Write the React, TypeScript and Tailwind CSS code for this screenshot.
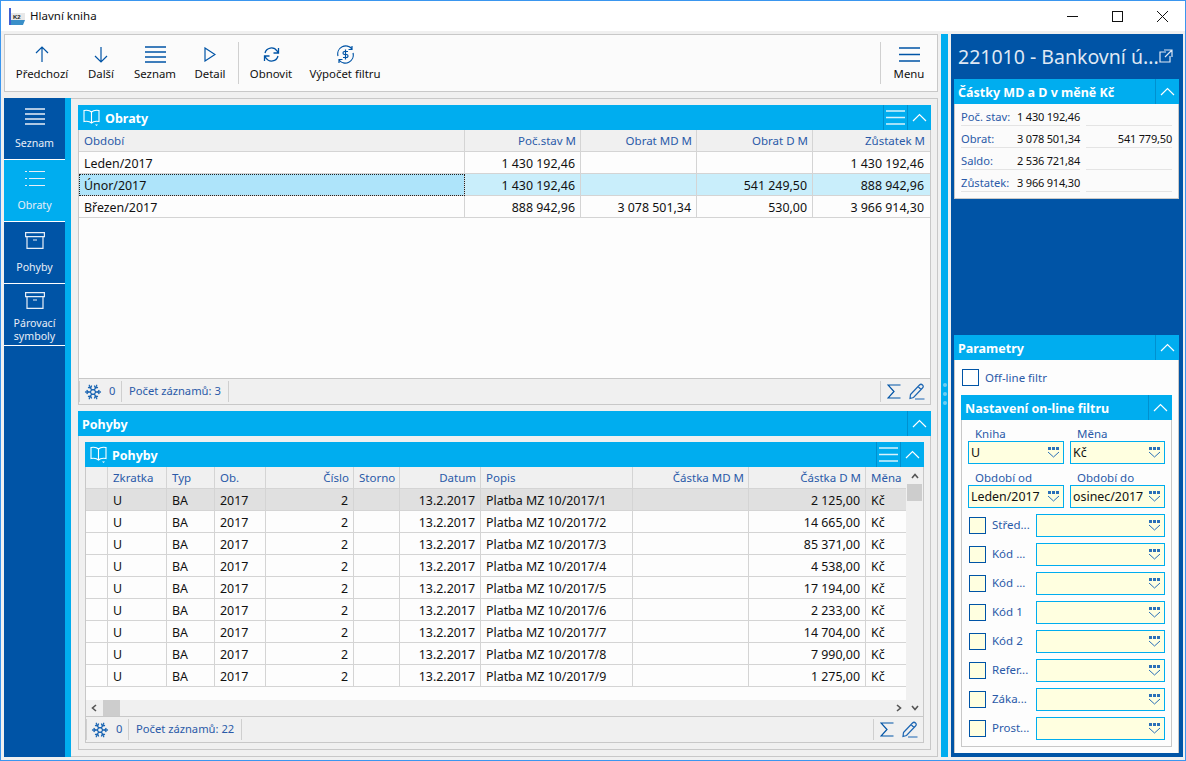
import React from "react";
import { Snowflake } from "lucide-react";

const Lines = ({ c = "#0054a6", w = 21, n = 4 }: { c?: string; w?: number; n?: number }) => (
  <svg width={w} height="17" viewBox={`0 0 ${w} 17`} fill="none" stroke={c} strokeWidth="1.3">
    <path d={n === 4 ? `M0 1h${w}M0 6h${w}M0 11h${w}M0 16h${w}` : `M0 2h${w}M0 8.500h${w}M0 15h${w}`} />
  </svg>
);
const Chevron = () => (
  <svg width="15" height="9" viewBox="0 0 15 9" fill="none" stroke="#fff" strokeWidth="1.2"><path d="M1 8l6.500-6.500L14 8" /></svg>
);
const Drop = () => (
  <svg width="13" height="11" viewBox="0 0 13 11" className="shrink-0">
    <path d="M1 0h3v3H1zM5 0h3v3H5zM9 0h3v3H9z" fill="#2b70b8" />
    <path d="M1 5l5.500 5L12 5" fill="none" stroke="#2b70b8" strokeWidth="1" />
  </svg>
);
const Box = () => (
  <svg width="20" height="17" viewBox="0 0 20 17" fill="none" stroke="#e8eef7" strokeWidth="1.2">
    <path d="M.6.6h18.800v4H.6zM2 4.600v11.800h16V4.600M8 8h4" />
  </svg>
);
const Book = () => (
  <svg width="17" height="17" viewBox="0 0 17 17" fill="none" stroke="#fff" strokeWidth="1.1" className="ml-[5px] mr-[5px] shrink-0">
    <path d="M8.500 3C7 1.500 4 1 1 1.500v11c3-.5 6 0 7.500 1.500 1.500-1.500 4.500-2 7.500-1.500v-11C13 1 10 1.500 8.500 3zM8.500 3v11" />
    <path d="M12 15.500h3l-1.500 1.500z" fill="#fff" stroke="none" />
  </svg>
);
const Head = ({ title, book, lines }: { title: string; book?: boolean; lines?: boolean }) => (
  <div className="h-[25px] shrink-0 bg-[#00adef] flex items-center text-white font-bold text-[12.5px]">
    {book && <Book />}
    <span className={`pt-[3px] ${book ? "" : "ml-[4px]"}`}>{title}</span>
    <div className="flex-1" />
    {lines && (
      <div className="h-full w-[24px] border-l border-[#0090cf] flex items-center justify-center">
        <Lines c="#d8f2fc" w={19} n={3} />
      </div>
    )}
    <div className="h-full w-[24px] border-l border-[#0090cf] flex items-center justify-center"><Chevron /></div>
  </div>
);
const Foot = ({ n }: { n: number }) => (
  <div className="h-[25px] shrink-0 bg-[#f0f0f0] flex items-center text-[11.2px] text-[#2a5aa8]">
    <div className="h-[21px] w-[43px] border-x border-[#cfcfcf] flex items-center pl-[4px] gap-[7px] shrink-0">
      <Snowflake size={18} strokeWidth={1.7} className="text-[#1c66b3]" />
      <span>0</span>
    </div>
    <div className="h-[21px] px-[7px] border-r border-[#cfcfcf] flex items-center">Počet záznamů: {n}</div>
    <div className="flex-1" />
    <div className="h-[21px] w-[50px] border-l border-[#cfcfcf] flex items-center pl-[6px] gap-[8px]">
      <svg width="14" height="15" viewBox="0 0 14 15" fill="none" stroke="#0054a6" strokeWidth="1.2"><path d="M13.500 1H1l6 6.500L1 14h12.500" /></svg>
      <svg width="16" height="17" viewBox="0 0 16 17" fill="none" stroke="#1c66b3" strokeWidth="1.2"><path d="M1.500 11.500L10.500 2a2 2 0 0 1 3 3l-9 9.500-3.500 1zM9 3.500l3 3M6 16h9.500" /></svg>
    </div>
  </div>
);

const Tool = ({ w, label, children }: { w: string; label: string; children: React.ReactNode }) => (
  <div className={`${w} shrink-0 self-start flex flex-col items-center pt-[10px]`}>
    <div className="h-[19px] flex items-center justify-center">{children}</div>
    <div className="mt-px text-[11.4px] leading-[18px] text-[#111] whitespace-nowrap">{label}</div>
  </div>
);

const Nav = ({ label, active, h, children }: { label: string; active?: boolean; h?: boolean; children: React.ReactNode }) => (
  <div className={`h-[62px] border-b border-white flex flex-col items-center text-[#e8eef7] text-[10.6px] leading-[13px] text-center ${active ? "bg-[#00adef]" : ""} ${h ? "pt-[7px]" : "pt-[9px]"}`}>
    <div className="h-[18px] flex items-center">{children}</div>
    <div className={h ? "mt-[8px]" : "mt-[12px]"}>{label}</div>
  </div>
);

const HeadCell = ({ t, r, className = "" }: { t: string; r?: boolean; className?: string }) => (
  <div className={`h-[22px] border-r border-b border-[#d4d4d4] bg-[#f0f0f0] text-[11.5px] text-[#2a5aa8] px-[4px] flex items-center whitespace-nowrap overflow-hidden ${r ? "justify-end" : ""} ${className}`}>{t}</div>
);
const Cell = ({ t, r, className = "" }: { t?: string; r?: boolean; className?: string }) => (
  <div className={`h-[22px] border-r border-b border-[#d4d4d4] text-[12.4px] text-[#111] pl-[5px] pr-[5px] pt-[3px] flex items-center whitespace-nowrap overflow-hidden ${r ? "justify-end" : ""} ${className}`}>{t}</div>
);

const obraty = [
  ["Leden/2017", "1 430 192,46", "", "", "1 430 192,46"],
  ["Únor/2017", "1 430 192,46", "", "541 249,50", "888 942,96"],
  ["Březen/2017", "888 942,96", "3 078 501,34", "530,00", "3 966 914,30"],
];
const amounts = ["2 125,00", "14 665,00", "85 371,00", "4 538,00", "17 194,00", "2 233,00", "14 704,00", "7 990,00", "1 275,00"];

const Field = ({ v, w }: { v?: string; w: string }) => (
  <div className={`${w} h-[23px] border border-[#00adef] bg-[#ffffe0] flex items-center pl-[2px] pr-[3px] text-[12.4px] text-[#111] overflow-hidden`}>
    <span className="flex-1 pt-px whitespace-nowrap overflow-hidden">{v}</span>
    <Drop />
  </div>
);
const Check = ({ bg }: { bg: string }) => <div className={`w-[17px] h-[17px] border border-[#0054a6] shrink-0 ${bg}`} />;

export default function App() {
  return (
    <div className="w-[1186px] h-[761px] border border-[#3a96ef] bg-[#f0f0f0] flex flex-col overflow-hidden font-['Noto_Sans',sans-serif] text-[11.5px]">
      <div className="h-[30px] shrink-0 bg-white flex items-center">
        <svg width="16" height="17" viewBox="0 0 16 17" className="ml-[8px] shrink-0">
          <rect x="0" y="0" width="2" height="17" fill="#3f5fd0" />
          <rect x="2" y="5" width="14" height="7" fill="#e8e8e8" />
          <path d="M2 12h14l-2 5H2z" fill="#3a8fc8" />
          <text x="4" y="11" fontSize="6" fontWeight="700" fill="#222" fontFamily="'Liberation Sans',sans-serif">K2</text>
        </svg>
        <span className="ml-[5px] text-[11.5px] text-[#111]">Hlavní kniha</span>
        <div className="flex-1" />
        <svg width="15" height="15" viewBox="0 0 15 15" fill="none" stroke="#111" className="mr-[30px]"><path d="M2 7.500h11" /></svg>
        <svg width="15" height="15" viewBox="0 0 15 15" fill="none" stroke="#111" className="mr-[30px]"><rect x="2.500" y="2.500" width="10" height="10" /></svg>
        <svg width="15" height="15" viewBox="0 0 15 15" fill="none" stroke="#111" className="mr-[15px]"><path d="M2 2l11 11M13 2L2 13" /></svg>
      </div>
      <div className="flex-1 min-h-0 flex pl-[3px] pt-[3px] pb-[3px] pr-[2px]">
        <div className="w-[934px] shrink-0 flex flex-col">
          <div className="h-[58px] shrink-0 border border-[#c8c8c8] bg-[#fbfbfb] flex items-center">
            <Tool w="w-[74px]" label="Předchozí">
              <svg width="14" height="17" viewBox="0 0 14 17" fill="none" stroke="#0054a6" strokeWidth="1.2"><path d="M7 16V1M1 7l6-6 6 6" /></svg>
            </Tool>
            <Tool w="w-[44px]" label="Další">
              <svg width="14" height="17" viewBox="0 0 14 17" fill="none" stroke="#0054a6" strokeWidth="1.2"><path d="M7 1v15M1 10l6 6 6-6" /></svg>
            </Tool>
            <Tool w="w-[64px]" label="Seznam"><Lines /></Tool>
            <Tool w="w-[46px]" label="Detail">
              <svg width="12" height="15" viewBox="0 0 12 15" fill="none" stroke="#0054a6" strokeWidth="1.2"><path d="M1 1l10 6.500L1 14z" /></svg>
            </Tool>
            <div className="ml-[5px] w-px h-[42px] bg-[#d0d0d0]" />
            <Tool w="w-[64px]" label="Obnovit">
              <svg width="17" height="17" viewBox="0 0 17 17" fill="none" stroke="#0054a6" strokeWidth="1.3"><path d="M2 7a6.600 6.600 0 0 1 12-2l1.500 2M15.500 2v5h-5M15 10a6.600 6.600 0 0 1-12 2l-1.500-2M1.500 15v-5h5" /></svg>
            </Tool>
            <Tool w="w-[84px]" label="Výpočet filtru">
              <svg width="19" height="19" viewBox="0 0 19 19" fill="none" stroke="#0054a6" strokeWidth="1.2">
                <path d="M2 11A8 8 0 0 1 16 4M17 8A8 8 0 0 1 3 15M16 1v3.500h-3.500M3 18v-3.500h3.500" />
                <path d="M12 6.500H8.500a1.500 1.500 0 0 0 0 3h2a1.500 1.500 0 0 1 0 3H7M9.500 4.500v10" />
              </svg>
            </Tool>
            <div className="flex-1" />
            <div className="w-px h-[42px] bg-[#d0d0d0]" />
            <Tool w="w-[56px]" label="Menu"><Lines n={3} /></Tool>
          </div>

          <div className="flex-1 min-h-0 flex mt-[6px]">
            <div className="w-[61px] shrink-0 bg-[#0054a6]">
              <Nav label="Seznam"><Lines c="#e8eef7" w={20} /></Nav>
              <Nav label="Obraty" active>
                <svg width="20" height="17" viewBox="0 0 20 17" fill="none" stroke="#e8eef7" strokeWidth="1.1"><path d="M4 1.500h16M4 8.500h16M4 15.500h16M0 1.500h2M0 8.500h2M0 15.500h2" /></svg>
              </Nav>
              <Nav label="Pohyby"><Box /></Nav>
              <Nav label="Párovací symboly" h><Box /></Nav>
            </div>
            <div className="w-[6px] shrink-0 bg-[#00adef]" />
            <div className="flex-1 min-w-0 border-t border-r border-b border-[#c8c8c8] pl-[7px] pr-[6px] pt-[6px] pb-[6px] flex flex-col">
              <div className="h-[300px] shrink-0 flex flex-col border-b border-[#c8c8c8]">
                <Head title="Obraty" book lines />
                <div className="flex-1 min-h-0 bg-[#fdfdfd] border-x border-[#c8c8c8] grid grid-cols-[386px_116px_116px_116px_1fr] content-start">
                  <HeadCell t="Období" className="px-[5px]" />
                  <HeadCell t="Poč.stav M" r />
                  <HeadCell t="Obrat MD M" r />
                  <HeadCell t="Obrat D M" r />
                  <HeadCell t="Zůstatek M" r className="border-r-0 pr-[5px]" />
                  {obraty.map((row, i) =>
                    row.map((t, j) => (
                      <Cell
                        key={`${i}-${j}`}
                        t={t}
                        r={j > 0}
                        className={`${j === 4 ? "border-r-0 pr-[6px]" : ""} ${i === 1 ? (j === 0 ? "bg-[#aee4fa] outline-1 outline-dotted outline-[#222] -outline-offset-1" : "bg-[#c9eefb]") : ""}`}
                      />
                    ))
                  )}
                </div>
                <div className="border-x border-t border-[#c8c8c8]"><Foot n={3} /></div>
              </div>

              <div className="mt-[6px] h-[339px] shrink-0 flex flex-col border-b border-[#c8c8c8]">
                <Head title="Pohyby" />
                <div className="flex-1 min-h-0 border-x border-[#c8c8c8] pl-[6px] pr-[6px] pt-[6px] pb-[6px] flex">
                  <div className="flex-1 min-w-0 flex flex-col border-b border-[#c8c8c8]">
                    <Head title="Pohyby" book lines />
                    <div className="flex-1 min-h-0 flex border-x border-[#c8c8c8]">
                      <div className="flex-1 min-w-0 flex flex-col bg-[#fdfdfd]">
                        <div className="grid grid-cols-[22px_59px_48px_51px_88px_46px_81px_152px_116px_117px_1fr]">
                          {["", "Zkratka", "Typ", "Ob."].map((t, i) => <HeadCell key={i} t={t} className="px-[5px]" />)}
                          <HeadCell t="Číslo" r />
                          <HeadCell t="Storno" className="px-[5px]" />
                          <HeadCell t="Datum" r />
                          <HeadCell t="Popis" className="px-[5px]" />
                          <HeadCell t="Částka MD M" r />
                          <HeadCell t="Částka D M" r />
                          <HeadCell t="Měna" className="border-r-0 px-[5px]" />
                          {amounts.map((a, i) => {
                            const bg = i === 0 ? "bg-[#e0e0e0]" : "";
                            return (
                              <React.Fragment key={i}>
                                <Cell className={bg} />
                                <Cell t="U" className={bg} />
                                <Cell t="BA" className={bg} />
                                <Cell t="2017" className={bg} />
                                <Cell t="2" r className={bg} />
                                <Cell className={bg} />
                                <Cell t="13.2.2017" r className={bg} />
                                <Cell t={`Platba MZ 10/2017/${i + 1}`} className={bg} />
                                <Cell className={bg} />
                                <Cell t={a} r className={bg} />
                                <Cell t="Kč" className={`border-r-0 ${bg}`} />
                              </React.Fragment>
                            );
                          })}
                        </div>
                        <div className="flex-1" />
                        <div className="h-[16px] shrink-0 bg-[#f0f0f0] flex items-center justify-between pr-[4px] pl-[5px]">
                          <div className="flex items-center">
                            <svg width="6" height="8" viewBox="0 0 6 8" fill="none" stroke="#555" strokeWidth="1.600"><path d="M5 1L1.500 4 5 7" /></svg>
                            <div className="ml-[6px] w-[17px] h-[16px] bg-[#cdcdcd]" />
                          </div>
                          <svg width="6" height="8" viewBox="0 0 6 8" fill="none" stroke="#555" strokeWidth="1.600"><path d="M1 1l3.500 3L1 7" /></svg>
                        </div>
                      </div>
                      <div className="w-[17px] shrink-0 bg-[#f0f0f0] flex flex-col items-center pt-[6px] pb-[5px]">
                        <svg width="8" height="6" viewBox="0 0 8 6" fill="none" stroke="#555" strokeWidth="1.600"><path d="M1 5l3-3.500L7 5" /></svg>
                        <div className="mt-[5px] w-[15px] h-[17px] bg-[#cdcdcd]" />
                        <div className="flex-1" />
                        <svg width="8" height="6" viewBox="0 0 8 6" fill="none" stroke="#555" strokeWidth="1.600"><path d="M1 1l3 3.500L7 1" /></svg>
                      </div>
                    </div>
                    <div className="border-x border-t border-[#c8c8c8]"><Foot n={22} /></div>
                  </div>
                </div>
              </div>
            </div>
          </div>
        </div>

        <div className="w-[7px] shrink-0 ml-[3px] bg-[#00adef] flex flex-col items-center justify-center gap-[5px] pb-[4px]">
          <div className="w-[4px] h-[4px] rounded-full bg-[#6fcdf2]" />
          <div className="w-[4px] h-[4px] rounded-full bg-[#6fcdf2]" />
          <div className="w-[4px] h-[4px] rounded-full bg-[#6fcdf2]" />
        </div>

        <div className="ml-[3px] flex-1 min-w-0 bg-[#0054a6] pl-[3px] pr-[4px] pb-[4px] flex flex-col">
          <div className="h-[45px] shrink-0 flex items-center text-[#dfe8f4]">
            <span className="ml-[4px] text-[19.500px] whitespace-nowrap">221010 - Bankovní ú...</span>
            <div className="flex-1" />
            <svg width="14" height="14" viewBox="0 0 14 14" fill="none" stroke="#dfe8f4" strokeWidth="1.200" className="mr-[6px] mb-[2px] shrink-0">
              <path d="M7 3H1v10h10V7M5 1h8v7M13 1L6 8" />
            </svg>
          </div>
          <Head title="Částky MD a D v měně Kč" />
          <div className="h-[95px] shrink-0 bg-[#fbfbfb] border-x border-b border-[#c8c8c8] pl-[6px] pr-[6px] flex flex-col">
            {[
              ["Poč. stav:", "1 430 192,46", ""],
              ["Obrat:", "3 078 501,34", "541 779,50"],
              ["Saldo:", "2 536 721,84", ""],
              ["Zůstatek:", "3 966 914,30", ""],
            ].map(([l, a, b]) => (
              <div key={l} className="h-[22px] shrink-0 flex whitespace-nowrap">
                <div className="w-[119px] border-b border-[#e4e4e4] pt-[6px] flex items-center justify-between">
                  <span className="text-[#2a5aa8] text-[11.200px]">{l}</span>
                  <span className="text-[#111] text-[11px] tracking-[-0.2px]">{a}</span>
                </div>
                <div className="ml-[6px] flex-1 border-b border-[#e4e4e4] pt-[6px] flex items-center justify-end text-[#111] text-[11px] tracking-[-0.2px]">{b}</div>
              </div>
            ))}
          </div>
          <div className="flex-1" />
          <Head title="Parametry" />
          <div className="h-[393px] shrink-0 bg-[#fdfdfd] border-x border-[#c8c8c8] pl-[6px] pr-[6px] pb-[6px] flex flex-col">
            <div className="h-[35px] shrink-0 flex items-center pl-[1px] gap-[6px] text-[#2a5aa8]">
              <Check bg="bg-white" />
              <span>Off-line filtr</span>
            </div>
            <Head title="Nastavení on-line filtru" />
            <div className="flex-1 min-h-0 border-x border-b border-[#c8c8c8] pl-[6px] pr-[6px] flex flex-col">
              <div className="h-[21px] shrink-0 pt-[7px] flex items-start leading-[14px] text-[#2a5aa8]">
                <span className="w-[102px] pl-[7px]">Kniha</span>
                <span className="pl-[7px]">Měna</span>
              </div>
              <div className="flex gap-[6px]">
                <Field v="U" w="w-[96px]" />
                <Field v="Kč" w="w-[95px]" />
              </div>
              <div className="h-[21px] shrink-0 pt-[7px] flex items-start leading-[14px] text-[#2a5aa8]">
                <span className="w-[102px] pl-[7px]">Období od</span>
                <span className="pl-[7px]">Období do</span>
              </div>
              <div className="flex gap-[6px]">
                <Field v="Leden/2017" w="w-[96px]" />
                <Field v="osinec/2017" w="w-[95px]" />
              </div>
              <div className="mt-[6px] flex flex-col gap-[6px]">
                {["Střed...", "Kód ...", "Kód ...", "Kód 1", "Kód 2", "Refer...", "Záka...", "Prost..."].map((l, i) => (
                  <div key={i} className="flex items-center">
                    <div className="pl-[1px]"><Check bg="bg-[#ffffe0]" /></div>
                    <span className="ml-[6px] mb-px w-[44px] text-[#2a5aa8] whitespace-nowrap overflow-hidden">{l}</span>
                    <Field w="w-[129px]" />
                  </div>
                ))}
              </div>
            </div>
          </div>
        </div>
      </div>
    </div>
  );
}
